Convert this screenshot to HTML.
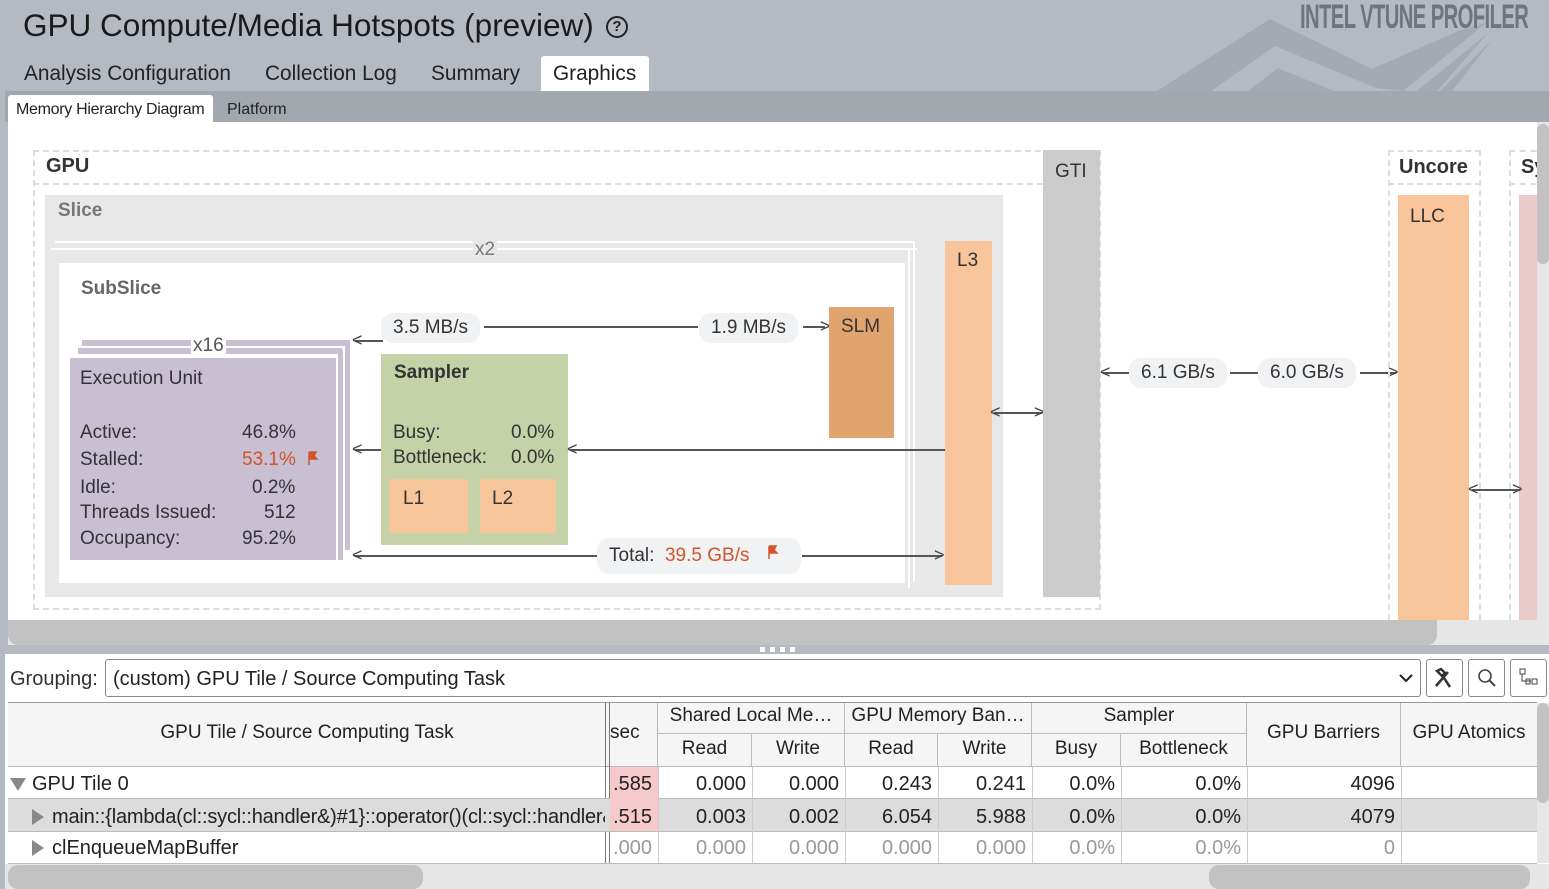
<!DOCTYPE html>
<html><head><meta charset="utf-8"><style>
*{box-sizing:border-box;margin:0;padding:0}
body{width:1549px;height:889px;overflow:hidden;background:#b5bac2;font-family:"Liberation Sans",sans-serif;position:relative;color:#222}
.a{position:absolute}
.pill{position:absolute;background:#f1f2f4;border-radius:12px;height:30px;line-height:30px;font-size:19px;color:#333;padding:0 12px;white-space:nowrap}
.hl{position:absolute;height:2px;background:#555}
.dash{position:absolute;border:2px dashed #ddd}
.cell{position:absolute;font-size:20px;white-space:nowrap}
.th{position:absolute;font-size:19px;text-align:center;color:#222;border-right:1px solid #bbb;border-bottom:1px solid #bbb}
.r{text-align:right;padding-right:6px}
</style></head><body>
<!-- header -->
<svg class="a" style="left:0;top:0" width="1549" height="91"><polygon points="1157,91 1270,19 1372,69 1456,32 1486,23 1403,91 1376,88 1275,46 1211,91" fill="#a5a9b1"/><polygon points="1248,91 1278,68 1334,91" fill="#a5a9b1"/><polygon points="1417,91 1488,33 1437,91" fill="#a5a9b1"/><polygon points="1440,91 1492,40 1452,91" fill="#a5a9b1"/></svg>
<div class="a" style="left:23px;top:7px;font-size:31.5px;color:#1a1a1a">GPU Compute/Media Hotspots (preview)</div>
<div class="a" style="left:606px;top:16px;width:22px;height:22px;border:2px solid #222;border-radius:50%;font-size:15px;text-align:center;line-height:18px;font-weight:bold">?</div>
<div class="a" style="left:1300px;top:-2px;font-size:34px;font-weight:bold;color:#6f747d;transform:scaleX(.595);transform-origin:left;letter-spacing:-1px;white-space:nowrap;width:400px">INTEL VTUNE PROFILER</div>
<div class="a" style="left:24px;top:62px;font-size:20.8px">Analysis Configuration</div>
<div class="a" style="left:265px;top:62px;font-size:20.8px">Collection Log</div>
<div class="a" style="left:431px;top:62px;font-size:20.8px">Summary</div>
<div class="a" style="left:541px;top:56px;width:108px;height:36px;background:#fff;border-radius:3px 3px 0 0;font-size:20.8px;padding:6px 0 0 12px">Graphics</div>
<div class="a" style="left:5px;top:91px;width:1544px;height:31px;background:#a3a7ae"></div>
<div class="a" style="left:8px;top:95px;width:205px;height:27px;background:#fff;font-size:16px;padding:6px 0 0 8px;border-radius:3px 3px 0 0;letter-spacing:-.3px">Memory Hierarchy Diagram</div>
<div class="a" style="left:227px;top:101px;font-size:16px">Platform</div>
<!-- diagram -->
<div class="a" style="left:8px;top:122px;width:1541px;height:498px;background:#fff;overflow:hidden">
 <div class="dash" style="left:25px;top:28px;width:1068px;height:460px"></div>
 <div class="dash" style="left:25px;top:28px;width:1040px;height:35px;border-left:none;border-top:none;border-right:none"></div>
 <div class="a" style="left:38px;top:33px;font-size:20px;font-weight:bold;color:#333">GPU</div>
 <div class="a" style="left:37px;top:73px;width:958px;height:402px;background:#e8e8e8"></div>
 <div class="a" style="left:50px;top:78px;font-size:19px;font-weight:bold;color:#777">Slice</div>
 <div class="a" style="left:47px;top:119px;width:860px;height:2px;background:#fff"></div>
 <div class="a" style="left:43px;top:126px;width:866px;height:2px;background:#fff"></div>
 <div class="a" style="left:465px;top:117px;font-size:19px;color:#777;background:#e8e8e8;padding:0 2px">x2</div>
 <div class="a" style="left:905px;top:119px;width:2px;height:340px;background:#fff"></div>
 <div class="a" style="left:900px;top:126px;width:2px;height:340px;background:#fff"></div>
 <div class="a" style="left:51px;top:141px;width:846px;height:320px;background:#fff"></div>
 <div class="a" style="left:73px;top:156px;font-size:19px;font-weight:bold;color:#666">SubSlice</div>
 <!-- EU -->
 <div class="a" style="left:74px;top:218px;width:266px;height:6px;background:#c8bfd3"></div>
 <div class="a" style="left:70px;top:226px;width:272px;height:6px;background:#c8bfd3"></div>
 <div class="a" style="left:337px;top:218px;width:5px;height:210px;background:#c8bfd3"></div>
 <div class="a" style="left:334px;top:226px;width:3px;height:208px;background:#fff"></div>
 <div class="a" style="left:330px;top:228px;width:5px;height:210px;background:#c8bfd3"></div>
 <div class="a" style="left:183px;top:213px;font-size:19px;color:#555;background:#fff;padding:0 2px">x16</div>
 <div class="a" style="left:62px;top:236px;width:266px;height:202px;background:#c8bfd3;font-size:19px;color:#333">
  <div class="a" style="left:10px;top:10px">Execution Unit</div>
  <div class="a" style="left:10px;top:64px">Active:</div><div class="a" style="left:172px;top:64px">46.8%</div>
  <div class="a" style="left:10px;top:91px">Stalled:</div><div class="a" style="left:172px;top:91px;color:#d0552a">53.1%</div>
  <svg class="a" style="left:237px;top:93px" width="12" height="14"><path d="M2 1v13M2 1h7l-2 4 3 3H2" fill="#d0552a" stroke="#d0552a" stroke-width="1.5"/></svg>
  <div class="a" style="left:10px;top:119px">Idle:</div><div class="a" style="left:182px;top:119px">0.2%</div>
  <div class="a" style="left:10px;top:144px">Threads Issued:</div><div class="a" style="left:194px;top:144px">512</div>
  <div class="a" style="left:10px;top:170px">Occupancy:</div><div class="a" style="left:172px;top:170px">95.2%</div>
 </div>
 <!-- arrows -->
 <div class="hl" style="left:347px;top:218px;width:28px"></div><div class="a" style="left:344px;top:208px;font-size:18px;color:#444">&lt;</div>
 <div class="pill" style="left:373px;top:191px">3.5 MB/s</div>
 <div class="hl" style="left:476px;top:204px;width:214px"></div>
 <div class="pill" style="left:691px;top:191px">1.9 MB/s</div>
 <div class="hl" style="left:795px;top:204px;width:22px"></div><div class="a" style="left:812px;top:194px;font-size:18px;color:#444">&gt;</div>
 <div class="a" style="left:821px;top:185px;width:65px;height:131px;background:#e2a46e;font-size:19px;padding:9px 0 0 12px;color:#333">SLM</div>
 <div class="a" style="left:373px;top:232px;width:187px;height:191px;background:#c5d2a8;font-size:19px;color:#333">
  <div class="a" style="left:13px;top:8px;font-weight:bold">Sampler</div>
  <div class="a" style="left:12px;top:68px">Busy:</div><div class="a" style="left:130px;top:68px">0.0%</div>
  <div class="a" style="left:12px;top:93px">Bottleneck:</div><div class="a" style="left:130px;top:93px">0.0%</div>
  <div class="a" style="left:8px;top:125px;width:79px;height:54px;background:#f7c59a;padding:9px 14px">L1</div>
  <div class="a" style="left:99px;top:125px;width:76px;height:54px;background:#f7c59a;padding:9px 12px">L2</div>
 </div>
 <div class="hl" style="left:347px;top:327px;width:26px"></div><div class="a" style="left:344px;top:317px;font-size:18px;color:#444">&lt;</div>
 <div class="hl" style="left:562px;top:327px;width:376px"></div><div class="a" style="left:559px;top:317px;font-size:18px;color:#444">&lt;</div>
 <div class="hl" style="left:347px;top:433px;width:242px"></div><div class="a" style="left:344px;top:423px;font-size:18px;color:#444">&lt;</div>
 <div class="pill" style="left:589px;top:416px;height:36px;line-height:36px;width:204px">Total:&nbsp; <span style="color:#d0552a">39.5 GB/s</span></div>
 <svg class="a" style="left:759px;top:423px" width="12" height="14"><path d="M2 1v13M2 1h7l-2 4 3 3H2" fill="#d0552a" stroke="#d0552a" stroke-width="1.5"/></svg>
 <div class="hl" style="left:794px;top:433px;width:140px"></div><div class="a" style="left:926px;top:423px;font-size:18px;color:#444">&gt;</div>
 <div class="a" style="left:937px;top:119px;width:47px;height:344px;background:#f8c49a;font-size:19px;padding:9px 0 0 12px;color:#333">L3</div>
 <div class="hl" style="left:986px;top:290px;width:48px"></div>
 <div class="a" style="left:982px;top:280px;font-size:18px;color:#444">&lt;</div><div class="a" style="left:1026px;top:280px;font-size:18px;color:#444">&gt;</div>
 <div class="a" style="left:1035px;top:28px;width:57px;height:447px;background:#cccccc;font-size:19px;padding:11px 0 0 12px;color:#333">GTI</div>
 <div class="hl" style="left:1095px;top:250px;width:27px"></div><div class="a" style="left:1092px;top:240px;font-size:18px;color:#444">&lt;</div>
 <div class="pill" style="left:1121px;top:236px">6.1 GB/s</div>
 <div class="hl" style="left:1222px;top:250px;width:28px"></div>
 <div class="pill" style="left:1250px;top:236px">6.0 GB/s</div>
 <div class="hl" style="left:1352px;top:250px;width:36px"></div><div class="a" style="left:1380px;top:240px;font-size:18px;color:#444">&gt;</div>
 <div class="dash" style="left:1380px;top:28px;width:93px;height:490px"></div>
 <div class="dash" style="left:1380px;top:28px;width:93px;height:35px;border-left:none;border-right:none;border-top:none"></div>
 <div class="a" style="left:1391px;top:34px;font-size:20px;font-weight:bold;color:#333">Uncore</div>
 <div class="a" style="left:1390px;top:73px;width:71px;height:430px;background:#f8c49a;font-size:19px;padding:11px 0 0 12px;color:#333">LLC</div>
 <div class="dash" style="left:1501px;top:28px;width:60px;height:490px"></div>
 <div class="dash" style="left:1501px;top:28px;width:60px;height:35px;border-left:none;border-right:none;border-top:none"></div>
 <div class="a" style="left:1513px;top:34px;font-size:20px;font-weight:bold;color:#333">Sy</div>
 <div class="a" style="left:1511px;top:73px;width:30px;height:430px;background:#ebcaca"></div>
 <div class="hl" style="left:1464px;top:367px;width:48px"></div>
 <div class="a" style="left:1460px;top:357px;font-size:18px;color:#444">&lt;</div><div class="a" style="left:1504px;top:357px;font-size:18px;color:#444">&gt;</div>
 <div class="a" style="left:1529px;top:0;width:12px;height:498px;background:#e6e6e6"></div>
 <div class="a" style="left:1529px;top:2px;width:12px;height:140px;background:#c2c2c2;border-radius:6px"></div>
</div>
<div class="a" style="left:8px;top:620px;width:1541px;height:25px;background:#e6e6e6"></div>
<div class="a" style="left:8px;top:620px;width:1429px;height:25px;background:#c2c2c2;border-radius:0 0 10px 10px"></div>
<div class="a" style="left:760px;top:647px;width:40px;height:5px;background:repeating-linear-gradient(90deg,#fff 0 5px,transparent 5px 10px)"></div>
<!-- grouping -->
<div class="a" style="left:5px;top:654px;width:1544px;height:235px;background:#fff"></div>
<div class="a" style="left:10px;top:668px;font-size:20px;color:#333">Grouping:</div>
<div class="a" style="left:105px;top:659px;width:1316px;height:38px;border:1px solid #888;border-radius:3px;font-size:20px;padding:8px 0 0 7px">(custom) GPU Tile / Source Computing Task</div>
<svg class="a" style="left:1398px;top:672px" width="16" height="12"><path d="M2 3l6 6 6-6" stroke="#222" stroke-width="2" fill="none"/></svg>
<div class="a" style="left:1426px;top:659px;width:37px;height:38px;border:1px solid #888;border-radius:3px"></div>
<svg class="a" style="left:1433px;top:667px" width="24" height="22"><path d="M4 4l4-2 4 4-3 3zM9 8l8 12M15 5l-12 14" stroke="#333" stroke-width="2.5" fill="none"/></svg>
<div class="a" style="left:1468px;top:659px;width:37px;height:38px;border:1px solid #888;border-radius:3px"></div>
<svg class="a" style="left:1476px;top:668px" width="22" height="20"><circle cx="9" cy="8" r="6" stroke="#444" stroke-width="1.6" fill="none"/><path d="M13 12l6 6" stroke="#444" stroke-width="2"/></svg>
<div class="a" style="left:1510px;top:659px;width:37px;height:38px;border:1px solid #888;border-radius:3px"></div>
<svg class="a" style="left:1518px;top:668px" width="22" height="20"><rect x="2" y="1" width="5" height="5" fill="none" stroke="#444"/><rect x="14" y="11" width="5" height="5" fill="none" stroke="#444"/><path d="M4 6v7h9" stroke="#444" fill="none"/><rect x="8" y="11" width="4" height="5" fill="none" stroke="#444"/></svg>
<!-- table header -->
<div class="a" style="left:8px;top:702px;width:1529px;height:65px;background:#f5f5f5;border-top:1px solid #999;border-bottom:1px solid #999"></div>
<div class="th" style="left:8px;top:703px;width:598px;height:64px;line-height:60px;border-right:none">GPU Tile / Source Computing Task</div>
<div class="a" style="left:605px;top:703px;width:1px;height:186px;background:#777"></div>
<div class="a" style="left:609px;top:703px;width:1px;height:186px;background:#777"></div>
<div class="th" style="left:610px;top:703px;width:48px;height:64px;line-height:60px;text-align:left">sec</div>
<div class="th" style="left:658px;top:703px;width:187px;height:31px;line-height:26px">Shared Local Me…</div>
<div class="th" style="left:658px;top:734px;width:94px;height:33px;line-height:30px">Read</div>
<div class="th" style="left:752px;top:734px;width:93px;height:33px;line-height:30px">Write</div>
<div class="th" style="left:845px;top:703px;width:187px;height:31px;line-height:26px">GPU Memory Ban…</div>
<div class="th" style="left:845px;top:734px;width:93px;height:33px;line-height:30px">Read</div>
<div class="th" style="left:938px;top:734px;width:94px;height:33px;line-height:30px">Write</div>
<div class="th" style="left:1032px;top:703px;width:215px;height:31px;line-height:26px">Sampler</div>
<div class="th" style="left:1032px;top:734px;width:89px;height:33px;line-height:30px">Busy</div>
<div class="th" style="left:1121px;top:734px;width:126px;height:33px;line-height:30px">Bottleneck</div>
<div class="th" style="left:1247px;top:703px;width:154px;height:64px;line-height:60px">GPU Barriers</div>
<div class="th" style="left:1401px;top:703px;width:136px;height:64px;line-height:60px;border-right:none">GPU Atomics</div>
<!-- rows -->
<div class="a" style="left:8px;top:799px;width:1529px;height:32px;background:#dcdcdc"></div>
<div class="a" style="left:8px;top:798px;width:1529px;height:1px;background:#bbb"></div>
<div class="a" style="left:8px;top:831px;width:1529px;height:1px;background:#bbb"></div>
<div class="a" style="left:8px;top:863px;width:1529px;height:1px;background:#bbb"></div>
<div class="a" style="left:610px;top:767px;width:48px;height:64px;background:#f6c9cc"></div>
<svg class="a" style="left:9px;top:777px" width="18" height="14"><path d="M1 1h16l-8 13z" fill="#888"/></svg>
<div class="cell" style="left:32px;top:773px">GPU Tile 0</div>
<svg class="a" style="left:31px;top:808px" width="14" height="18"><path d="M1 1v16l12-8z" fill="#888"/></svg>
<div class="cell" style="left:52px;top:806px;width:553px;overflow:hidden;letter-spacing:-.2px">main::{lambda(cl::sycl::handler&amp;)#1}::operator()(cl::sycl::handler&amp;)</div>
<svg class="a" style="left:31px;top:839px" width="14" height="18"><path d="M1 1v16l12-8z" fill="#888"/></svg>
<div class="cell" style="left:52px;top:837px">clEnqueueMapBuffer</div>
<div class="a" style="left:5px;top:864px;width:1544px;height:25px;background:#e6e6e6"></div>
<div class="a" style="left:8px;top:865px;width:415px;height:24px;background:#c2c2c2;border-radius:10px"></div>
<div class="a" style="left:1209px;top:865px;width:321px;height:24px;background:#c2c2c2;border-radius:10px"></div>
<div class="a" style="left:1537px;top:703px;width:12px;height:160px;background:#e6e6e6"></div>
<div class="a" style="left:1537px;top:703px;width:12px;height:100px;background:#c2c2c2;border-radius:6px"></div>
<!-- values -->
<div style="font-size:20px">
<div class="cell r" style="left:610px;top:773px;width:48px;overflow:hidden">.585</div>
<div class="cell r" style="left:610px;top:806px;width:48px;overflow:hidden">.515</div>
<div class="cell r" style="left:610px;top:837px;width:48px;color:#999;overflow:hidden">.000</div>
<div class="cell r" style="left:658px;top:773px;width:94px">0.000</div><div class="cell r" style="left:752px;top:773px;width:93px">0.000</div><div class="cell r" style="left:845px;top:773px;width:93px">0.243</div><div class="cell r" style="left:938px;top:773px;width:94px">0.241</div><div class="cell r" style="left:1032px;top:773px;width:89px">0.0%</div><div class="cell r" style="left:1121px;top:773px;width:126px">0.0%</div><div class="cell r" style="left:1247px;top:773px;width:154px">4096</div>
<div class="cell r" style="left:658px;top:806px;width:94px">0.003</div><div class="cell r" style="left:752px;top:806px;width:93px">0.002</div><div class="cell r" style="left:845px;top:806px;width:93px">6.054</div><div class="cell r" style="left:938px;top:806px;width:94px">5.988</div><div class="cell r" style="left:1032px;top:806px;width:89px">0.0%</div><div class="cell r" style="left:1121px;top:806px;width:126px">0.0%</div><div class="cell r" style="left:1247px;top:806px;width:154px">4079</div>
<div style="color:#999"><div class="cell r" style="left:658px;top:837px;width:94px">0.000</div><div class="cell r" style="left:752px;top:837px;width:93px">0.000</div><div class="cell r" style="left:845px;top:837px;width:93px">0.000</div><div class="cell r" style="left:938px;top:837px;width:94px">0.000</div><div class="cell r" style="left:1032px;top:837px;width:89px">0.0%</div><div class="cell r" style="left:1121px;top:837px;width:126px">0.0%</div><div class="cell r" style="left:1247px;top:837px;width:154px">0</div></div>
</div>
<!-- column lines -->
<div class="a" style="left:658px;top:767px;width:1px;height:96px;background:#ccc"></div>
<div class="a" style="left:752px;top:767px;width:1px;height:96px;background:#ccc"></div>
<div class="a" style="left:845px;top:767px;width:1px;height:96px;background:#ccc"></div>
<div class="a" style="left:938px;top:767px;width:1px;height:96px;background:#ccc"></div>
<div class="a" style="left:1032px;top:767px;width:1px;height:96px;background:#ccc"></div>
<div class="a" style="left:1121px;top:767px;width:1px;height:96px;background:#ccc"></div>
<div class="a" style="left:1247px;top:767px;width:1px;height:96px;background:#ccc"></div>
<div class="a" style="left:1401px;top:767px;width:1px;height:96px;background:#ccc"></div>
</body></html>
